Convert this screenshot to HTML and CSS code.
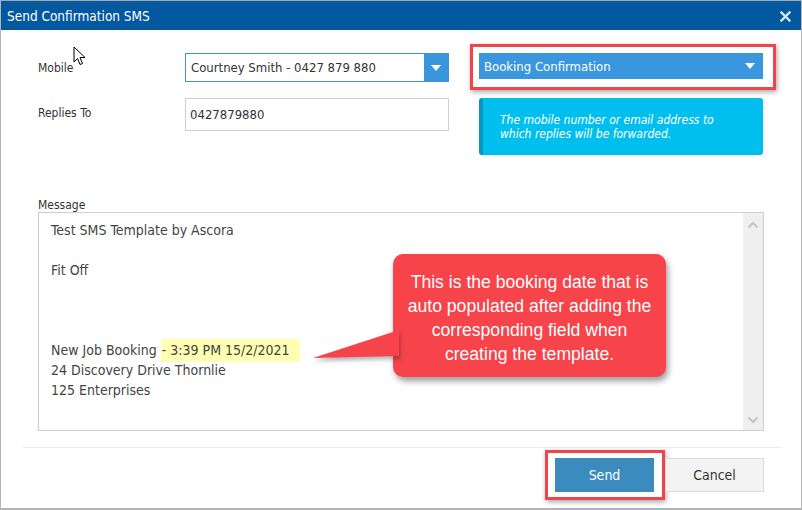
FILE: index.html
```html
<!DOCTYPE html>
<html>
<head>
    <title>Send Confirmation SMS</title>
    <link rel="stylesheet" href="styles.css">
</head>
<body>
    <div class="window">
        <div class="titlebar">
            <span class="title">Send Confirmation SMS</span>
            <svg class="close" width="11" height="11" viewBox="0 0 11 11">
                <path d="M1.5 1.5 L9.5 9.5 M9.5 1.5 L1.5 9.5" stroke="#d6e6f5" stroke-width="2.4" stroke-linecap="square"/>
            </svg>
        </div>

        <div class="content">
            <div class="top">
                <div class="fields">
                    <label class="label">Mobile</label>
                    <div class="select">
                        <span class="select-text">Courtney Smith - 0427 879 880</span>
                        <span class="select-btn"><span class="tri"></span></span>
                    </div>
                    <label class="label label-replies">Replies To</label>
                    <div class="input">0427879880</div>
                </div>

                <div class="side">
                    <div class="annot annot-template">
                        <div class="template">
                            <span>Booking Confirmation</span>
                            <span class="tri"></span>
                        </div>
                    </div>
                    <div class="info">
                        The mobile number or email address to<br>
                        which replies will be forwarded.
                    </div>
                </div>
            </div>

            <div class="message">
                <div class="label msg-label">Message</div>
                <div class="textarea">
                    <div class="text">
                        <div>Test SMS Template by Ascora</div>
                        <div>&nbsp;</div>
                        <div>Fit Off</div>
                        <div>&nbsp;</div>
                        <div>&nbsp;</div>
                        <div>&nbsp;</div>
                        <div>New Job Booking <span class="hl">- 3:39 PM 15/2/2021</span></div>
                        <div>24 Discovery Drive Thornlie</div>
                        <div>125 Enterprises</div>
                    </div>
                    <div class="scrollbar">
                        <svg width="12" height="8" viewBox="0 0 12 8"><path d="M1.5 6.5 L6 2 L10.5 6.5" fill="none" stroke="#c4c4c4" stroke-width="2"/></svg>
                        <svg width="12" height="8" viewBox="0 0 12 8"><path d="M1.5 1.5 L6 6 L10.5 1.5" fill="none" stroke="#c4c4c4" stroke-width="2"/></svg>
                    </div>
                </div>
            </div>

            <div class="footer">
                <div class="annot annot-send">
                    <button class="btn btn-send">Send</button>
                </div>
                <button class="btn btn-cancel">Cancel</button>
            </div>

            <div class="callout">
                <svg class="tail" width="90" height="40" viewBox="0 0 90 40">
                    <polygon points="88,2 2,30 88,28" fill="#f7434a"/>
                </svg>
                This is the booking date that is auto populated after adding the corresponding field when creating the template.
            </div>

            <svg class="cursor" width="14" height="20" viewBox="0 0 14 20">
                <path d="M1 1 L1 16 L4.5 12.5 L7 18.5 L9.5 17.5 L7 11.5 L12 11.5 Z" fill="#fff" stroke="#000" stroke-width="1" stroke-linejoin="miter"/>
            </svg>
        </div>
    </div>
</body>
</html>
```

FILE: styles.css
```css
body {
    margin: 0;
    background: #fff;
    font-family: "DejaVu Sans Condensed", "Liberation Sans", sans-serif;
    color: #333;
}

.window {
    width: 800px;
    height: 507px;
    border-top: 1px solid #a8a8a8;
    border-left: 1px solid #b4b4b4;
    border-right: 1px solid #b4b4b4;
    border-bottom: 2px solid #b4b4b4;
    display: flex;
    flex-direction: column;
}

.titlebar {
    height: 29px;
    background: #02599f;
    display: flex;
    align-items: center;
    justify-content: space-between;
    padding: 0 10px 0 6px;
}

.title {
    color: #fff;
    font-size: 13.5px;
}

.close {
    display: block;
    margin-top: 1px;
}

.content {
    position: relative;
    flex: 1;
}

.top {
    display: flex;
    margin-top: 14px;
    padding-left: 37px;
}

.fields {
    display: grid;
    grid-template-columns: 147px 264px;
    grid-template-rows: 29px 33px;
    row-gap: 16px;
    padding-top: 9px;
    align-items: center;
}

.label {
    font-size: 12px;
    color: #333;
}

.label-replies {
    margin-top: -4px;
}

.select {
    height: 27px;
    border: 1px solid #3f93d9;
    display: flex;
    align-items: stretch;
}

.select-text {
    flex: 1;
    font-size: 13px;
    padding-left: 5px;
    line-height: 27px;
    color: #333;
}

.select-btn {
    width: 24px;
    background: #3a96dc;
    display: flex;
    align-items: center;
    justify-content: center;
}

.tri {
    width: 0;
    height: 0;
    border-left: 5px solid transparent;
    border-right: 5px solid transparent;
    border-top: 6px solid #fff;
}

.input {
    height: 33px;
    border: 1px solid #cfcfcf;
    font-size: 13px;
    line-height: 31px;
    padding-left: 4px;
    box-sizing: border-box;
}

.side {
    margin-left: 21px;
    display: flex;
    flex-direction: column;
}

.annot {
    border: 3px solid #f1434a;
    box-shadow: 1px 2px 5px rgba(0,0,0,0.35);
}

.annot-template {
    width: 284px;
    padding: 6px 10px 8px 6px;
}

.template {
    height: 26px;
    background: #3a97dd;
    color: #fff;
    font-size: 13px;
    display: flex;
    align-items: center;
    justify-content: space-between;
    padding: 0 8px 0 5px;
}

.info {
    margin: 8px 0 0 9px;
    width: 284px;
    height: 57px;
    background: #00bfee;
    border-left: 4px solid #0097c2;
    border-radius: 3px;
    padding: 15px 0 0 17px;
    box-sizing: border-box;
    color: #fff;
    font-size: 12px;
    font-style: italic;
    line-height: 14px;
}

.message {
    margin-top: 43px;
    padding-left: 37px;
}

.msg-label {
    line-height: 14px;
}

.textarea {
    width: 726px;
    height: 219px;
    border: 1px solid #cfcfcf;
    box-sizing: border-box;
    display: flex;
}

.text {
    flex: 1;
    padding: 7px 0 0 12px;
    font-size: 14px;
    line-height: 20px;
    color: #444;
}

.hl {
    background: #ffffb4;
    padding: 3px 10px 4px 1px;
}

.scrollbar {
    width: 20px;
    background: #efefef;
    display: flex;
    flex-direction: column;
    justify-content: space-between;
    align-items: center;
    padding: 8px 0 6px;
}

.footer {
    margin: 16px 20px 0 22px;
    border-top: 1px solid #ececec;
    padding: 2px 17px 0 0;
    display: flex;
    justify-content: flex-end;
}

.annot-send {
    padding: 5px 8px 5px 7px;
}

.btn {
    width: 99px;
    height: 34px;
    font-family: "DejaVu Sans Condensed", "Liberation Sans", sans-serif;
    font-size: 14px;
    border: none;
    display: block;
}

.btn-send {
    background: #3b8bbe;
    color: #fff;
}

.btn-cancel {
    margin-top: 8px;
    background: #f3f3f3;
    border: 1px solid #dcdcdc;
    color: #333;
}

.callout {
    position: absolute;
    left: 392px;
    top: 224px;
    width: 273px;
    height: 123px;
    box-sizing: border-box;
    padding: 16px 8px 0;
    background: #f7434a;
    border-radius: 10px;
    box-shadow: 2px 4px 6px rgba(0,0,0,0.4);
    color: #fff;
    font-family: "Liberation Sans", Arial, sans-serif;
    font-size: 17.6px;
    line-height: 24px;
    text-align: center;
}

.tail {
    position: absolute;
    left: -82px;
    top: 74px;
    filter: drop-shadow(1px 3px 2px rgba(0,0,0,0.3));
}

.cursor {
    position: absolute;
    left: 72px;
    top: 16px;
}
```
